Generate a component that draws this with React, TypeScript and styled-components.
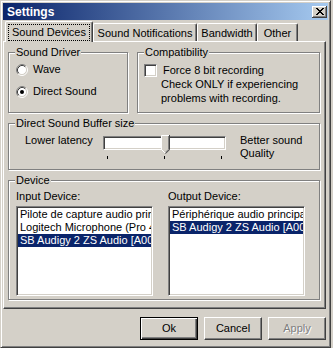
import React from 'react';
import styled, { createGlobalStyle } from 'styled-components';

const GlobalStyle = createGlobalStyle`
  html, body {
    margin: 0;
    padding: 0;
    background: #d4d0c8;
  }
  body {
    font-family: "Liberation Sans", Arial, sans-serif;
    font-size: 11px;
    color: #000;
  }
  * {
    box-sizing: border-box;
  }
`;

const Window = styled.div`
  width: 331px;
  height: 348px;
  display: flex;
  flex-direction: column;
  padding: 2px;
  background: #d4d0c8;
  border: 1px solid;
  border-color: #d4d0c8 #404040 #404040 #d4d0c8;
  box-shadow: inset 1px 1px #fff, inset -1px -1px #808080;
`;

const TitleBar = styled.div`
  height: 17px;
  margin-bottom: 1px;
  display: flex;
  align-items: center;
  justify-content: space-between;
  padding: 0 1px 0 4px;
  background: linear-gradient(to right, #0a246a, #a6caf0);
  color: #fff;
  font-size: 12px;
  font-weight: bold;
  line-height: 14px;
`;

const CloseButton = styled.div`
  width: 15px;
  height: 12px;
  display: flex;
  align-items: center;
  justify-content: center;
  background: #d4d0c8;
  box-shadow: inset -1px -1px #404040, inset 1px 1px #fff, inset -2px -2px #808080;
`;

const TabStrip = styled.div`
  position: relative;
  z-index: 1;
  height: 20px;
  display: flex;
  align-items: flex-end;
  padding-left: 2px;
`;

const Tab = styled.div<{ $active?: boolean; $width: number }>`
  width: ${p => p.$width}px;
  height: ${p => (p.$active ? 21 : 18)}px;
  margin-bottom: ${p => (p.$active ? -1 : 0)}px;
  display: flex;
  align-items: center;
  justify-content: center;
  padding-top: ${p => (p.$active ? 0 : 2)}px;
  background: #d4d0c8;
  border: 1px solid;
  border-bottom: none;
  border-color: #fff #404040 #fff #fff;
  border-radius: 2px 2px 0 0;
  box-shadow: inset -1px 0 #808080;
  line-height: 13px;
  white-space: nowrap;
`;

const FocusLabel = styled.span`
  width: 82px;
  height: 17px;
  display: flex;
  align-items: center;
  justify-content: center;
  border: 1px dotted #000;
`;

const Panel = styled.div`
  height: 268px;
  margin-right: 2px;
  display: flex;
  flex-direction: column;
  gap: 4px;
  padding: 4px;
  border: 1px solid;
  border-color: #fff #404040 #404040 #fff;
  box-shadow: inset -1px -1px #808080;
`;

const Row = styled.div`
  display: flex;
  gap: 9px;
`;

const Group = styled.div<{ $width: number; $height: number }>`
  width: ${p => p.$width}px;
  height: ${p => p.$height}px;
  margin-top: 6px;
  display: flex;
  flex-direction: column;
  border: 1px solid #808080;
  box-shadow: inset 1px 1px #fff, 1px 1px #fff;
`;

const Legend = styled.div`
  align-self: flex-start;
  height: 13px;
  margin: -7px 0 0 6px;
  padding: 0 1px;
  line-height: 13px;
  background: #d4d0c8;
`;

const RadioList = styled.div`
  display: flex;
  flex-direction: column;
  gap: 9px;
  padding: 4px 0 0 7px;
`;

const OptionRow = styled.label`
  display: flex;
  align-items: center;
  gap: 5px;
  height: 13px;
  line-height: 13px;
`;

const CheckRow = styled.label`
  display: flex;
  align-items: center;
  gap: 6px;
  height: 13px;
  margin: 5px 0 0 6px;
  line-height: 13px;
`;

const CheckBox = styled.span`
  width: 13px;
  height: 13px;
  flex: none;
  background: #fff;
  border: 1px solid;
  border-color: #808080 #fff #fff #808080;
  box-shadow: inset 1px 1px #404040, inset -1px -1px #d4d0c8;
`;

const Note = styled.div`
  margin-left: 23px;
  line-height: 14px;
`;

const BufferRow = styled.div`
  display: flex;
  align-items: flex-start;
  padding: 4px 0 0 16px;
  line-height: 13px;
`;

const SideLabel = styled.div<{ $width?: number }>`
  width: ${p => (p.$width ? `${p.$width}px` : 'auto')};
  flex: none;
`;

const Slider = styled.div`
  position: relative;
  width: 123px;
  margin: 2px 14px 0 0;
  flex: none;
`;

const Track = styled.div`
  height: 14px;
  background: #fff;
  border: 1px solid;
  border-color: #808080 #fff #fff #808080;
  box-shadow: inset 1px 1px #404040, inset -1px -1px #d4d0c8;
`;

const Thumb = styled.svg`
  position: absolute;
  left: 58px;
  top: -1px;
`;

const Ticks = styled.div`
  display: flex;
  justify-content: space-between;
  height: 3px;
  margin-top: 6px;
  padding: 0 4px;
`;

const Tick = styled.span`
  width: 1px;
  height: 3px;
  background: #000;
`;

const DeviceRow = styled.div`
  display: flex;
  gap: 15px;
  padding: 3px 0 0 7px;
`;

const DeviceColumn = styled.div`
  width: 137px;
  display: flex;
  flex-direction: column;
  gap: 3px;
  line-height: 13px;
`;

const ListBox = styled.div`
  height: 90px;
  padding: 1px;
  background: #fff;
  border: 1px solid;
  border-color: #808080 #fff #fff #808080;
  box-shadow: inset 1px 1px #404040, inset -1px -1px #d4d0c8;
  overflow: hidden;
`;

const ListItem = styled.div<{ $selected?: boolean }>`
  height: 13px;
  padding-left: 2px;
  line-height: 13px;
  white-space: nowrap;
  overflow: hidden;
  background: ${p => (p.$selected ? '#0a246a' : 'transparent')};
  color: ${p => (p.$selected ? '#fff' : '#000')};
`;

const ButtonBar = styled.div`
  display: flex;
  justify-content: flex-end;
  gap: 6px;
  margin-top: 8px;
  padding-right: 2px;
`;

const Button = styled.button<{ $default?: boolean }>`
  width: 58px;
  height: 23px;
  padding: 0;
  font: inherit;
  line-height: 13px;
  background: #d4d0c8;
  color: #000;
  border: 1px solid;
  border-color: ${p => (p.$default ? '#000' : '#fff #404040 #404040 #fff')};
  box-shadow: ${p =>
    p.$default
      ? 'inset 1px 1px #fff, inset -1px -1px #404040, inset -2px -2px #808080'
      : 'inset -1px -1px #808080'};

  &:disabled {
    color: #808080;
    text-shadow: 1px 1px #fff;
  }
`;

const CloseGlyph = () => {
  const rows = ['xx....xx', '.xx..xx.', '..xxxx..', '...xx...', '..xxxx..', '.xx..xx.', 'xx....xx'];
  return (
    <svg width="8" height="7" viewBox="0 0 8 7" shapeRendering="crispEdges">
      {rows.flatMap((row, y) =>
        row.split('').map((c, x) => (c === 'x' ? <rect key={`${x}-${y}`} x={x} y={y} width="1" height="1" fill="#000" /> : null))
      )}
    </svg>
  );
};

const Radio = ({ checked }: { checked?: boolean }) => (
  <svg width="12" height="12" viewBox="0 0 12 12" style={{ flex: 'none' }}>
    <circle cx="6" cy="6" r="4.5" fill="#fff" />
    <path d="M2.11 9.89A5.5 5.5 0 0 1 9.89 2.11" stroke="#808080" fill="none" />
    <path d="M9.89 2.11A5.5 5.5 0 0 1 2.11 9.89" stroke="#fff" fill="none" />
    <path d="M2.82 9.18A4.5 4.5 0 0 1 9.18 2.82" stroke="#404040" fill="none" />
    <path d="M9.18 2.82A4.5 4.5 0 0 1 2.82 9.18" stroke="#d4d0c8" fill="none" />
    {checked && <circle cx="6" cy="6" r="2" fill="#000" />}
  </svg>
);

const tabs = [
  { label: 'Sound Devices', width: 88 },
  { label: 'Sound Notifications', width: 104 },
  { label: 'Bandwidth', width: 60 },
  { label: 'Other', width: 41 },
];

const inputDevices = ['Pilote de capture audio principal', 'Logitech Microphone (Pro 4000)', 'SB Audigy 2 ZS Audio [A000]'];
const outputDevices = ['Périphérique audio principal', 'SB Audigy 2 ZS Audio [A000]'];

const DeviceList = ({ title, items, selected }: { title: string; items: string[]; selected: number }) => (
  <DeviceColumn>
    <div>{title}</div>
    <ListBox>
      {items.map((item, i) => (
        <ListItem key={item} $selected={i === selected}>
          {item}
        </ListItem>
      ))}
    </ListBox>
  </DeviceColumn>
);

const App = () => (
  <>
    <GlobalStyle />
    <Window>
      <TitleBar>
        <span>Settings</span>
        <CloseButton>
          <CloseGlyph />
        </CloseButton>
      </TitleBar>

      <TabStrip>
        {tabs.map((tab, i) => (
          <Tab key={tab.label} $active={i === 0} $width={tab.width}>
            {i === 0 ? <FocusLabel>{tab.label}</FocusLabel> : tab.label}
          </Tab>
        ))}
      </TabStrip>

      <Panel>
        <Row>
          <Group $width={120} $height={61}>
            <Legend>Sound Driver</Legend>
            <RadioList>
              <OptionRow>
                <Radio />
                Wave
              </OptionRow>
              <OptionRow>
                <Radio checked />
                Direct Sound
              </OptionRow>
            </RadioList>
          </Group>
          <Group $width={183} $height={61}>
            <Legend>Compatibility</Legend>
            <CheckRow>
              <CheckBox />
              Force 8 bit recording
            </CheckRow>
            <Note>
              Check ONLY if experiencing
              <br />
              problems with recording.
            </Note>
          </Group>
        </Row>

        <Group $width={312} $height={47}>
          <Legend>Direct Sound Buffer size</Legend>
          <BufferRow>
            <SideLabel $width={78}>Lower latency</SideLabel>
            <Slider>
              <Track />
              <Thumb width="9" height="19" viewBox="0 0 9 19">
                <path d="M0 0H9V14.5L4.5 19L0 14.5Z" fill="#d4d0c8" />
                <path d="M0.5 15V0.5H8" stroke="#fff" fill="none" />
                <path d="M0.5 14.5L4.5 18.5" stroke="#fff" fill="none" />
                <path d="M8.5 0V14.7L4.5 18.7" stroke="#404040" fill="none" />
                <path d="M7.5 1V14.3L4.5 17.3" stroke="#808080" fill="none" />
              </Thumb>
              <Ticks>
                <Tick />
                <Tick />
                <Tick />
              </Ticks>
            </Slider>
            <SideLabel>
              Better sound
              <br />
              Quality
            </SideLabel>
          </BufferRow>
        </Group>

        <Group $width={312} $height={120}>
          <Legend>Device</Legend>
          <DeviceRow>
            <DeviceList title="Input Device:" items={inputDevices} selected={2} />
            <DeviceList title="Output Device:" items={outputDevices} selected={1} />
          </DeviceRow>
        </Group>
      </Panel>

      <ButtonBar>
        <Button $default>Ok</Button>
        <Button>Cancel</Button>
        <Button disabled>Apply</Button>
      </ButtonBar>
    </Window>
  </>
);

export default App;
